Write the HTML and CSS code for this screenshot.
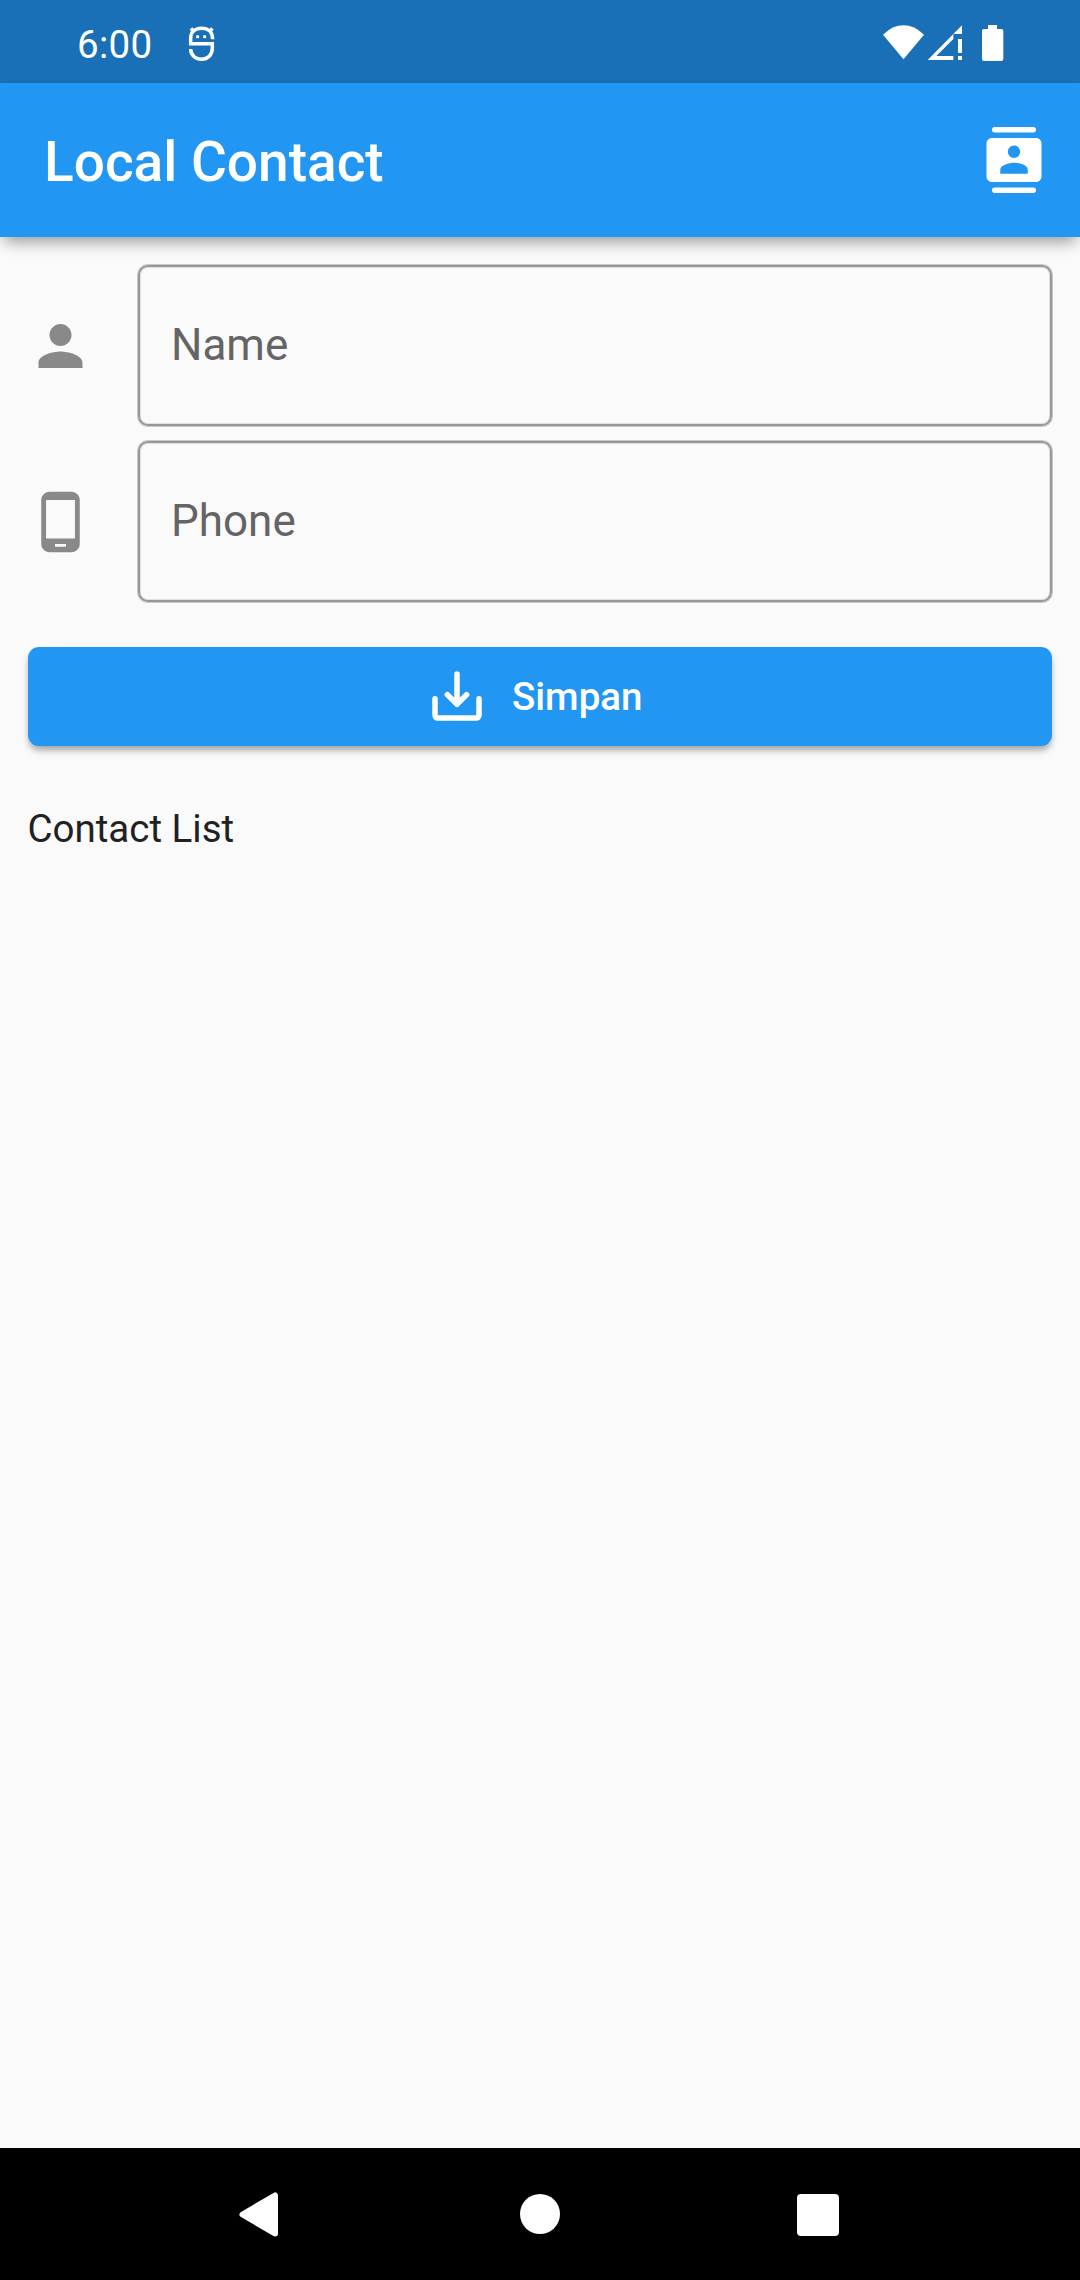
FILE: index.html
```
<!DOCTYPE html>
<html lang="id">
<head>
<meta charset="utf-8">
<title>Local Contact</title>
<link rel="stylesheet" href="styles.css">
</head>
<body>
<div class="screen">
  <div class="status-bar">
    <span class="clock">6:00</span>
    <svg class="debug-icon" viewBox="384 44 81 111" aria-hidden="true">
      <g fill="none" stroke="#fff" stroke-width="10.500">
        <path d="M458 87C458 64 444 54 425 54S392 64 392 84V100H457V114C457 134 443 147 425 147S392 135 392 116"/>
        <path d="M403 66L393 54M447 66L457 54"/>
      </g>
      <circle cx="413" cy="79" r="5" fill="#fff"/>
      <circle cx="434" cy="79" r="5" fill="#fff"/>
    </svg>
    <svg class="system-icons" viewBox="69 45 363 108" fill="#fff" aria-hidden="true">
      <path d="M69 74Q98 46 130.500 46T192 74L130.500 148Z"/>
      <path d="M306 46V72H280V87L229 138H280V150H203Z"/>
      <path d="M294 87h12v42h-12zM294 138h12v12h-12z"/>
      <path d="M384 45h27v12h13q6 0 6 6v84q0 6-6 6h-52q-6 0-6-6v-84q0-6 6-6h12z"/>
    </svg>
  </div>

  <header class="app-bar">
    <h1 class="app-title">Local Contact</h1>
    <svg class="icon" viewBox="0 0 24 24" aria-hidden="true">
      <path fill="#fff" fill-rule="evenodd" d="M5 0h14a1 1 0 0 1 0 2H5a1 1 0 0 1 0-2zM5 22h14a1 1 0 0 1 0 2H5a1 1 0 0 1 0-2zM4 4h16c1.100 0 2 .9 2 2v12c0 1.100-.9 2-2 2H4c-1.100 0-2-.9-2-2V6c0-1.100.9-2 2-2zM12 6.750a2.250 2.250 0 1 0 0 4.500a2.250 2.250 0 1 0 0-4.500zM17 17H7v-1.500C7 13.830 10.330 13 12 13s5 .83 5 2.500z"/>
    </svg>
  </header>

  <main class="content">
    <div class="field-row">
      <svg class="icon field-icon" viewBox="0.18 0 24 24" aria-hidden="true">
        <path d="M12 12c2.210 0 4-1.790 4-4s-1.790-4-4-4-4 1.790-4 4 1.790 4 4 4zm0 2c-2.670 0-8 1.340-8 4v2h16v-2c0-2.660-5.330-4-8-4z"/>
      </svg>
      <div class="field"><span class="field-label">Name</span></div>
    </div>
    <div class="field-row">
      <svg class="icon field-icon" viewBox="0.18 0 24 24" aria-hidden="true">
        <path d="M16 1H8C6.340 1 5 2.340 5 4v16c0 1.660 1.340 3 3 3h8c1.660 0 3-1.340 3-3V4c0-1.660-1.340-3-3-3zm-2 20h-4v-1h4v1zm3.250-3H6.750V4h10.500v14z"/>
      </svg>
      <div class="field"><span class="field-label">Phone</span></div>
    </div>
    <button class="save-button" type="button">
      <svg class="icon save-icon" viewBox="0 0 24 24" fill="none" stroke="#fff" stroke-width="2" stroke-linecap="round" stroke-linejoin="round" aria-hidden="true">
        <path d="M4 13v6a1 1 0 0 0 1 1h14a1 1 0 0 0 1-1v-6M12 4v10.500M8.500 11.500L12 15l3.500-3.500"/>
      </svg>
      <span>Simpan</span>
    </button>
    <h2 class="list-title">Contact List</h2>
  </main>

  <nav class="nav-bar">
    <svg class="nav-back" viewBox="0 0 39 45" aria-hidden="true">
      <path fill="#fff" stroke="#fff" stroke-width="6" stroke-linejoin="round" d="M36 3.500V41.500L3.500 22.500Z"/>
    </svg>
    <span class="nav-home"></span>
    <span class="nav-recents"></span>
  </nav>
</div>
</body>
</html>
```
FILE: styles.css
```
* {
  box-sizing: border-box;
}

body {
  margin: 0;
  background: #fafafa;
  font-family: Roboto, "Noto Sans", sans-serif;
}

.screen {
  display: flex;
  flex-direction: column;
  width: 1080px;
  height: 2280px;
  overflow: hidden;
  background: #fafafa;
}

.status-bar {
  display: flex;
  align-items: flex-start;
  height: 83px;
  padding: 25px 76px 0 77px;
  background: #1a70b7;
  color: #fff;
}

.clock {
  margin-top: -3px;
  width: 111px;
  font-size: 38.5px;
  letter-spacing: 0.3px;
  line-height: 45px;
}

.debug-icon {
  width: 27px;
  height: 37px;
}

.system-icons {
  width: 121px;
  height: 36px;
  margin-left: auto;
}

.app-bar {
  display: flex;
  align-items: center;
  justify-content: space-between;
  height: 154px;
  padding: 0 33px 0 44px;
  background: #2196f3;
  box-shadow: 0 9px 14px -4px rgba(0, 0, 0, 0.38);
}

.app-title {
  margin: 4px 0 0;
  color: #fff;
  font-size: 55px;
  font-weight: 500;
  line-height: 64px;
}

.icon {
  flex: none;
  width: 66px;
  height: 66px;
}

.content {
  display: flex;
  flex: 1;
  flex-direction: column;
  padding: 28px 28px 0 27.5px;
}

.field-row {
  display: flex;
  align-items: center;
  gap: 44.5px;
  height: 161px;
  margin-bottom: 15px;
}

.field-icon {
  fill: #898989;
}

.field {
  display: flex;
  flex: 1;
  align-items: center;
  height: 161px;
  padding-left: 31px;
  border: 2px solid #979797;
  border-radius: 10px;
  box-shadow: 0 0 0 1px rgba(0, 0, 0, 0.2), inset 0 0 0 1px rgba(0, 0, 0, 0.1);
}

.field-label {
  margin-bottom: 2px;
  color: #646464;
  font-size: 44px;
  line-height: 52px;
}

.save-button {
  display: flex;
  align-items: center;
  justify-content: center;
  gap: 22px;
  height: 99px;
  margin: 30px 0 0;
  padding: 0 45px 0 32px;
  border: 0;
  border-radius: 11px;
  background: #2196f3;
  box-shadow: 0 5px 7px -1px rgba(0, 0, 0, 0.36);
  color: #fff;
  font-family: inherit;
  font-size: 38.5px;
  font-weight: 500;
}

.save-icon {
  margin-bottom: 2px;
}

.list-title {
  margin: 60px 0 0;
  color: #212121;
  font-size: 38.5px;
  font-weight: 400;
  line-height: 45px;
}

.nav-bar {
  display: grid;
  grid-template-columns: 239px 281px 277px auto;
  flex: none;
  height: 132px;
  padding-top: 44px;
  background: #000;
}

.nav-back {
  grid-column: 2;
  width: 39px;
  height: 45px;
}

.nav-home {
  width: 40px;
  height: 40px;
  margin-top: 2px;
  border-radius: 50%;
  background: #fff;
}

.nav-recents {
  width: 42px;
  height: 42px;
  margin-top: 2px;
  border-radius: 4px;
  background: #fff;
}
```
